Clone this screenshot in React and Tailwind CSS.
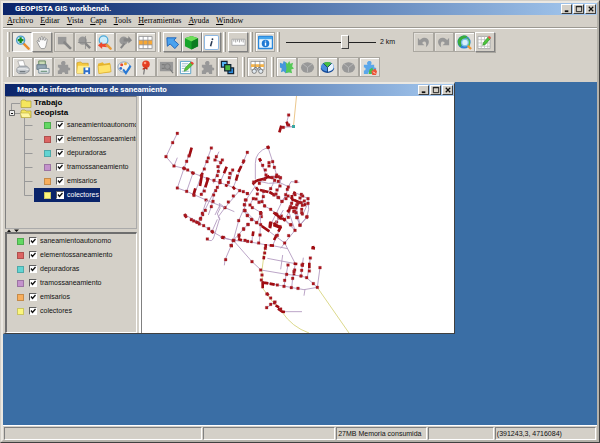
import React from "react";

const GREY = "#989898";
const GREY_DARK = "#868686";

const puzzle = "M2 5h4c-1.500-2 0-4 2-4s3 2 1.500 4H13v3c3-1 3 4 0 3v4H9.500c1-2.500-4-2.500-3 0H2v-4c2.500 1 2.500-4 0-3z";

const icons = {
  zoomIn: (
    <>
      <path d="M9.500 9.500l5 5" stroke="#e88a2a" strokeWidth="2.600" strokeLinecap="round" />
      <circle cx="6" cy="5.500" r="4.300" fill="#c4e2f4" stroke="#4b9ccb" strokeWidth="1.400" />
      <path d="M6 2.500v6M3 5.500h6" stroke="#128a1c" strokeWidth="2.400" />
    </>
  ),
  hand: (
    <path
      d="M2 6.500c1-1.500 2 0 2.500 1L4 4c0-1.500 1.600-1.500 1.800 0l.4 1.500.2-3c.1-1.300 1.600-1.300 1.800 0l.2 3 .8-2.500c.4-1.200 1.800-.8 1.600.5l-.3 2.500 1-1.400c.8-1 2-.2 1.500 1L12 10c-.4 2-1 4-2 4.500H6.500C4.500 12.500 3.500 9.500 2 6.500z"
      fill="#fbfbfb"
      stroke="#858585"
      strokeWidth="0.800"
    />
  ),
  zoomBox: (
    <>
      <path d="M1 2h9v8H1z" fill={GREY} />
      <path d="M8 8l6 6" stroke={GREY_DARK} strokeWidth="2.800" strokeLinecap="round" />
    </>
  ),
  zoomCross: (
    <>
      <circle cx="6" cy="6" r="4.500" fill={GREY} />
      <path d="M9 9l5 5" stroke={GREY_DARK} strokeWidth="2.600" />
      <path d="M1 8h14M9 1v14" stroke={GREY_DARK} strokeWidth="0.800" />
    </>
  ),
  zoomBack: (
    <>
      <path d="M9.500 9.500l5 5" stroke="#e99a35" strokeWidth="2.600" strokeLinecap="round" />
      <circle cx="7" cy="5.500" r="4.600" fill="#ccecfa" stroke="#4aa8d8" strokeWidth="1.300" />
      <path d="M1 11l4.500-3.500v2l5-.5-1.500 2 2 2-5.500-.5V15z" fill="#ee4a2e" />
    </>
  ),
  zoomForward: (
    <>
      <circle cx="6" cy="6" r="4.500" fill={GREY} />
      <path d="M7 9l-4 5" stroke={GREY_DARK} strokeWidth="2.200" />
      <path d="M6 3.500h5V1l4 4.500L11 9V7H6z" fill={GREY_DARK} />
    </>
  ),
  grid: (
    <>
      <path d="M1 1.500h14v13H1z" fill="#fff" stroke="#9b9b9b" />
      <path d="M1 5.500h14v5H1z" fill="#f7a836" />
      <path d="M5.500 1.500v13M10.500 1.500v13M1 5.500h14M1 10.500h14" stroke="#8b8e96" strokeWidth="0.800" />
    </>
  ),
  pointer: (
    <path d="M2 3h10L9.500 5.500l5 4.500-4 4.500-5-5L2.500 12z" fill="#4aa2ee" stroke="#1e62b8" strokeWidth="1" />
  ),
  cube: (
    <>
      <path d="M8 1l7 2.500v8.500l-7 3.500-7-3.500V3.500z" fill="#17a42b" />
      <path d="M8 1l7 2.500-7 3.500L1 3.500z" fill="#6ede58" />
      <path d="M8 7v8.500l7-3.500V3.500z" fill="#0b7c20" />
    </>
  ),
  info: (
    <>
      <rect x="0.500" y="0.500" width="15" height="15" rx="1.500" fill="#fff" stroke="#84b3e2" />
      <circle cx="9" cy="4.500" r="1" fill="#263751" />
      <path d="M8.500 6.500L7 12" stroke="#263751" strokeWidth="1.600" />
    </>
  ),
  ruler: (
    <>
      <path d="M1 4.500h14v6.500H1z" fill="#fff" stroke="#aaa" />
      <path d="M3 5v2M5 5v3M7 5v2M9 5v3M11 5v2M13 5v3" stroke="#777" strokeWidth="0.700" />
    </>
  ),
  infoWindow: (
    <>
      <rect x="0.500" y="1.500" width="15" height="13" rx="1" fill="#e9f6ff" stroke="#2a87db" strokeWidth="1.600" />
      <path d="M1 2h14v2.500H1z" fill="#45a6ee" />
      <circle cx="8" cy="9" r="4" fill="#1d78d4" />
      <path d="M8 8v3.500M8 6v1" stroke="#fff" strokeWidth="1.500" />
    </>
  ),
  undo: <path d="M2 3v8h7L6.500 8.500C9 5.500 12 7 10.500 13 16 9 14 2.500 8.500 3 6.500 3.200 5 4.500 4.200 5.500z" fill={GREY} />,
  redo: <path d="M14 3v8H7l2.500-2.500C7 5.500 4 7 5.500 13 0 9 2 2.500 7.500 3c2 .2 3.500 1.500 4.300 2.500z" fill={GREY} />,
  globe: (
    <>
      <circle cx="7.500" cy="7.500" r="7" fill="#2f83d8" />
      <path d="M3 2.500c3-3 7-2 8-1L8 4 4 7l1 3-1 3C0 10 0 5 3 2.500z" fill="#38ad3a" />
      <path d="M10 2c5 3 5 8 2 11l-2-3z" fill="#4cc14b" />
      <circle cx="8.500" cy="8" r="3.500" fill="#d7f0fb" stroke="#7ec1e8" strokeWidth="1.300" />
      <path d="M11.500 11.500L15 15" stroke="#ee9636" strokeWidth="2.400" />
    </>
  ),
  gridPencil: (
    <>
      <path d="M1 1.500h13v13H1z" fill="#fff" stroke="#aaa" />
      <path d="M4.500 1v14M8 1v14M11.500 1v14M1 5h13M1 8.500h13M1 12h13" stroke="#bbb" strokeWidth="0.800" />
      <path d="M6 11l1-3 5-6 2 2-5 6z" fill="#4cc63b" stroke="#238a20" strokeWidth="0.600" />
      <path d="M11.500 2.500L13 1l2 2-1.500 1.500z" fill="#ee5140" />
    </>
  ),
  printer: (
    <>
      <path d="M3 1l6-.5 2 6.500H5z" fill="#fff" stroke="#999" strokeWidth="0.700" />
      <path d="M2 9l3-2.500h7.500L15 9v3l-4 2.500H4L2 12.500z" fill="#bec3c8" stroke="#83888d" strokeWidth="0.800" />
      <path d="M2.500 9.500H11l3.500.5" stroke="#fff" fill="none" />
      <path d="M5 12.500h6" stroke="#596067" />
    </>
  ),
  printLayers: (
    <>
      <path d="M4 1h7v5H4z" fill="#c9dab6" stroke="#63865d" />
      <path d="M2 5h10v5H2z" fill="#94a7b4" stroke="#667a88" />
      <path d="M4 9h11v5H4z" fill="#e9eef0" stroke="#798c98" />
      <path d="M6 12h7" stroke="#4d7e5f" />
    </>
  ),
  puzzleGrey: <path d={puzzle} fill={GREY} />,
  folderSave: (
    <>
      <path d="M1 3l4-1 1.500 1.500H13V14H1z" fill="#f4c83d" stroke="#c99a20" strokeWidth="0.700" />
      <path d="M2 6h12l-1 8H1z" fill="#ffec8a" />
      <path d="M8 8h7v7H8z" fill="#2d6fcb" />
      <path d="M10 8h3v3h-3zM10 13h3v2h-3z" fill="#fff" />
    </>
  ),
  folder: (
    <>
      <path d="M1 4l5-1.500L7.500 4 14 3v10L2 14.500z" fill="#eab82e" />
      <path d="M1 6l13-1.500 1 8-13 2z" fill="#ffe36a" stroke="#d9a829" strokeWidth="0.700" />
    </>
  ),
  paletteCheck: (
    <>
      <ellipse cx="7.500" cy="7.500" rx="6.500" ry="5.500" fill="#f5f0e8" stroke="#8aa3bd" />
      <circle cx="5" cy="5" r="1.600" fill="#e44c35" />
      <circle cx="9" cy="4" r="1.600" fill="#f2a928" />
      <circle cx="4" cy="9" r="1.500" fill="#2f6fd0" />
      <path d="M6.500 10l3 4 5-8" fill="none" stroke="#2878d4" strokeWidth="2.200" />
    </>
  ),
  pin: (
    <>
      <path d="M7 9l-1 6.500" stroke="#777" strokeWidth="1.300" />
      <circle cx="8.500" cy="4.500" r="4" fill="#e43d22" />
      <circle cx="7.500" cy="3.200" r="1.400" fill="#ff9c80" />
      <path d="M5 10c2-2 4-2 5 0" stroke="#b92a18" strokeWidth="1.500" fill="none" />
    </>
  ),
  searchGrey: (
    <>
      <path d="M1 2h14v10H1z" fill={GREY} />
      <circle cx="9" cy="7" r="3" fill="none" stroke="#7c7c7c" />
      <path d="M11 9l4 5M3 5h3M3 9h3" stroke="#7c7c7c" strokeWidth="1.300" />
    </>
  ),
  notePencil: (
    <>
      <path d="M1.500 1.500h11v13h-11z" fill="#fff" stroke="#56a1c8" />
      <path d="M3 4h7M3 6.500h5M3 9h3M3 12h8" stroke="#99bac9" />
      <path d="M5.500 12l1-3.500 6-6 2.500 2-6 6z" fill="#56c43a" stroke="#2d8b25" strokeWidth="0.600" />
      <path d="M12 3l1.500-1.500L16 3.500 14.500 5z" fill="#e94335" />
    </>
  ),
  layers: (
    <>
      <path d="M1.500 1.500h6v6h-6z" fill="#55b4f4" stroke="#123" strokeWidth="1.300" />
      <path d="M8.500 8.500h6v6h-6z" fill="#2f8ddd" stroke="#123" strokeWidth="1.300" />
      <path d="M5 5h6.500v6.500H5z" fill="#48b83e" stroke="#123" strokeWidth="1.300" />
    </>
  ),
  gridSearch: (
    <>
      <path d="M1 1.500h14v9H1z" fill="#fff" stroke="#999" />
      <path d="M1 4.500h14v3H1z" fill="#f5b44b" />
      <path d="M5.500 1v10M10.500 1v10" stroke="#888" strokeWidth="0.800" />
      <path d="M3 12l2-4h2l1 2 1-2h2l2 4" fill="#bbc1c7" stroke="#666" strokeWidth="0.800" />
      <circle cx="4.500" cy="12" r="2.300" fill="#dfe8ef" stroke="#666" strokeWidth="0.800" />
      <circle cx="11.500" cy="12" r="2.300" fill="#dfe8ef" stroke="#666" strokeWidth="0.800" />
    </>
  ),
  puzzleMap: (
    <>
      <path d="M1 3l3 1 1-3 3 2v3l2 1-1 4 2 2-4 1-2-2-3 1 1-4-2-1z" fill="#4797dc" />
      <path d="M7 2l2 2 2-3 1 3 3-1-1 4 2 2-3 1 1 4-4-1-3 1 1-5z" fill="#55c957" />
    </>
  ),
  pieGrey: (
    <>
      <ellipse cx="8" cy="8" rx="7" ry="5.500" fill={GREY} />
      <path d="M8 8l-5-4M8 8l5-4M8 8v5" stroke="#b9b9b9" fill="none" />
    </>
  ),
  pie: (
    <>
      <ellipse cx="8" cy="8.800" rx="7" ry="5" fill="#164a99" />
      <ellipse cx="8" cy="7.200" rx="7" ry="5" fill="#488ddd" />
      <path d="M8 8L3.500 3.500Q8 .8 12.500 3.500z" fill="#48bd41" />
      <path d="M8 8l4.500-4.500c4 3 2 8-4.500 9z" fill="#e8f2fc" />
      <path d="M8 8L3.500 3.500M8 8l4.500-4.500M8 8v5" stroke="#184178" fill="none" />
    </>
  ),
  puzzleColor: (
    <>
      <path d={puzzle} fill="#5ba7ea" />
      <path d="M8 10l3-2 1 3-2 4H7z" fill="#4abf49" />
      <path d="M10 12l4-3 2 3-1 4h-4z" fill="#ec5437" />
      <path d="M12 12.500l2 2" stroke="#fff" />
    </>
  ),
};

const look = {
  raised: "border-t-white border-l-white border-r-[#808080] border-b-[#808080] shadow-[1px_1px_0_#a9a69f]",
  on: "border-t-[#808080] border-l-[#808080] border-r-white border-b-white bg-[#ece9e4]",
  flat: "border-[#aaa7a0] shadow-[inset_1px_1px_0_#e4e1dc]",
  lit: "border-[#aaa7a0] bg-[#e0ddd7] shadow-[inset_1px_1px_0_#fff]",
};

function Tool({ icon, label, kind = "flat" }) {
  return (
    <button
      type="button"
      aria-label={label}
      className={`flex h-5 w-full items-center justify-center border ${look[kind]}`}
    >
      <svg viewBox="0 0 16 16" className="h-[15px] w-[15px] shrink-0" fill="none">
        {icons[icon]}
      </svg>
    </button>
  );
}

function Grip() {
  return <div className="h-5 w-[3px] shrink-0 border-r border-l border-r-[#9a978f] border-l-white" />;
}

function TitleBar({ children, heading: Heading }) {
  return (
    <div className="flex h-3 items-center justify-between bg-linear-to-r from-[#0a246a] to-[#a6caf0] pr-px pl-3">
      <Heading className="font-[Roboto,'Liberation_Sans',sans-serif] text-[8px] leading-3 font-bold whitespace-nowrap text-white">
        {children}
      </Heading>
      <div className="flex gap-px">
        <CaptionButton label="Minimizar"><path d="M2 7h4" strokeWidth="2" /></CaptionButton>
        <CaptionButton label="Maximizar"><path d="M1.500 1.500h6v6h-6zM1 2h7" /></CaptionButton>
        <CaptionButton label="Cerrar"><path d="M2 2l5 5M7 2L2 7" strokeWidth="1.400" /></CaptionButton>
      </div>
    </div>
  );
}

function CaptionButton({ label, children }) {
  return (
    <button
      type="button"
      aria-label={label}
      className="flex h-[10px] w-[11px] items-center justify-center border border-t-white border-r-[#404040] border-b-[#404040] border-l-white bg-[#d4d0c8]"
    >
      <svg viewBox="0 0 9 9" className="h-2 w-2" fill="none" stroke="#111">{children}</svg>
    </button>
  );
}

const layers = [
  { name: "saneamientoautonomo", color: "bg-[#62d862]" },
  { name: "elementossaneamiento", color: "bg-[#dc6462]" },
  { name: "depuradoras", color: "bg-[#62d4d2]" },
  { name: "tramossaneamiento", color: "bg-[#c492cc]" },
  { name: "emisarios", color: "bg-[#f8ae5c]" },
  { name: "colectores", color: "bg-[#fcf67c]" },
];

function LayerRow({ layer, selected }) {
  return (
    <label
      className={`flex h-[14px] w-max items-center pr-px pl-[10px] text-[7px] leading-[14px] ${
        selected ? "bg-[#0a246a] text-white" : "text-[#111]"
      }`}
    >
      <span className={`mr-[5px] h-[7px] w-[7px] border border-black/20 ${layer.color}`} />
      <span className="mr-[3px] grid">
        <input
          type="checkbox"
          defaultChecked
          className="peer col-start-1 row-start-1 h-2 w-2 appearance-none border border-t-[#606060] border-r-white border-b-white border-l-[#606060] bg-white"
        />
        <svg viewBox="0 0 8 8" className="pointer-events-none invisible col-start-1 row-start-1 h-2 w-2 peer-checked:visible">
          <path d="M2 3.500l1.500 2L6.500 2" fill="none" stroke="#111" strokeWidth="1.300" />
        </svg>
      </span>
      {layer.name}
    </label>
  );
}

function LayerTree() {
  return (
    <div className="flex h-[133px] overflow-hidden border border-t-[#808080] border-r-[#aaa] border-b-[#aaa] border-l-[#808080] pt-px">
      <svg viewBox="0 0 28 120" className="h-[120px] w-7 shrink-0" fill="none" stroke="#999">
        <path d="M14 5.500H5.500V15M9 15.500h6M18.500 20v77.500M18.500 27.500h8M18.500 41.500h8M18.500 55.500h8M18.500 69.500h8M18.500 83.500h8M18.500 97.500h8" />
        <path d="M3.500 12.500h5v5h-5z" fill="#eee" stroke="#666" />
        <path d="M5 15.500h2" stroke="#111" />
        <g transform="translate(14 1)">
          <path d="M1 2l1-1h3l1 1h5v6.500H1z" fill="#f5e65c" stroke="#aa9c3a" strokeWidth="0.700" />
        </g>
        <g transform="translate(14 11)">
          <path d="M1 2l1-1h3l1 1h5v6.500H1z" fill="#f5e65c" stroke="#aa9c3a" strokeWidth="0.700" />
          <path d="M0 4h9l2 4.500H2z" fill="#fff6a0" stroke="#aa9c3a" strokeWidth="0.500" />
        </g>
      </svg>
      <div className="min-w-0">
        <p className="text-[8px] leading-[10px] font-bold text-black">Trabajo</p>
        <p className="text-[8px] leading-[10px] font-bold text-black">Geopista</p>
        <ul>
          {layers.map((l) => (
            <li key={l.name}><LayerRow layer={l} selected={l.name === "colectores"} /></li>
          ))}
        </ul>
      </div>
    </div>
  );
}

/* Sewer network, surveyed in sheets. Each sheet has its own origin and a 3:1 scale. */
const sheets = [
  {
    at: "translate(140 80) scale(0.33333)",
    pipes:
      "M112 160L98 188 78 230 102 258 132 265 159 279 203 296 240 308 280 322 322 341M112 233L102 258M155 203L132 265 112 324 140 334 198 360 255 383 283 395M159 279L140 334M214 204L184 287 162 346M237 215L225 240 247 247M246 240L220 310M203 296L184 343M260 262L240 308 222 340 214 380 205 405M222 335L181 418M278 270L265 317M322 217L311 243 280 322M300 330L255 383 235 410 240 420M240 375L225 405M446 105L440 127 446 140 460 140 422 142M384 202Q346 215 346 250V297M384 202L398 245 410 285M360 240L378 285",
    dense:
      "M155 203L148 228M128 262L137 268M154 276L163 282M187 278L180 318M166 325L160 347M205 294L196 322M198 295L208 298M260 260L252 280M240 297L240 312M255 315L263 318M313 240L308 250M304 258L295 276M293 284L288 302M278 320L285 328M318 340L326 340M424 137L418 157M440 125L444 138M359 236L362 244",
    dots:
      "112,160 98,188 78,230 102,258 132,265 143,270 159,279 112,324 140,334 147,228 140,244 162,346 198,360 214,204 205,234 201,245 193,267 184,287 229,230 225,240 247,240 242,248 234,260 235,274 232,287 222,301 240,308 232,322 227,332 221,345 219,364 214,380 265,366 255,383 280,348 196,391 188,404 181,418 184,343 193,333 270,280 278,270 268,293 265,307 322,217 311,243 299,332 310,335 322,341 316,360 314,375 314,392 446,105 446,135 430,142 384,202 398,245 387,248 403,262 387,258 368,256 376,270 378,285 410,285 421,294",
  },
  {
    at: "translate(140 200) scale(0.33333)",
    pipes:
      "M136 45L177 68 217 95 249 113 280 121M177 68L200 0M202 117Q216 130 222 110L239 55 232 42 240 25 238 10 255 23M217 92L232 58",
    dense: "M133 42L140 53M166 64L178 70M213 92L221 99M244 110L255 115M276 121L286 121",
    dots: "136,47 154,59 161,63 171,67 178,72 191,77 206,86 217,95 187,40 182,55 202,117 250,112 280,122",
  },
  {
    at: "translate(220 120) scale(0.33333)",
    pipes:
      "M98 193L110 182 140 170 165 168 184 174M98 193L115 209 145 215 168 225 186 245 198 225 217 236 240 248 263 251M110 182L145 190 180 188 205 200M205 200L213 185 238 187M205 200L198 225 186 245 168 282 154 310M165 168L158 195 145 215M184 174L172 215M130 215L126 245 134 258 152 268 168 280 194 298 212 315M126 245L100 235 92 250 90 258 123 278 112 308M105 200L78 240 72 272 82 288 110 308 145 330M222 215L212 250 206 278 194 298M244 222L240 248 225 275 232 293M264 235L266 268 260 292 240 316M263 251L247 287M230 220L265 236",
    dense:
      "M98 193L110 181M108 202L115 212M110 182L130 177M130 178L148 168M144 171L158 174M165 168L171 173M120 210L145 216M148 216L165 226M182 244L190 245M215 225L217 238M225 215L221 224M213 232L221 243M222 240L241 248M210 260L206 278M213 264L226 262M225 270L223 279M252 258L257 250M160 278L174 285M192 298L196 299M151 305L149 322M160 315L184 324M130 256L137 259M118 115L122 124M142 78L147 86",
    dots:
      "118,190 101,186 134,178 157,173 175,170 181,173 164,181 175,184 180,198 171,210 168,222 174,232 162,225 152,206 131,214 130,230 112,222 100,236 90,255 97,263 117,247 126,245 134,258 123,280 124,290 152,268 169,282 184,288 194,299 205,292 205,201 202,208 197,224 198,236 204,228 215,250 225,224 244,223 248,228 240,234 264,236 264,250 253,243 244,248 233,250 247,256 230,255 212,260 222,275 228,264 245,268 247,282 231,293 260,292 240,316 228,185 176,233 186,244 108,237 73,254 73,271 82,287 95,298 110,308 78,240 84,314 71,326 177,294 170,306 180,320 213,315",
  },
  {
    at: "translate(220 210) scale(0.33333)",
    pipes:
      "M70 0L56 32 40 91 33 108 15 150 13 166M40 91L0 82M40 91L96 155 123 180 200 193 243 198 260 203 292 232 300 173M40 91L90 96 136 104 158 107 203 116M40 91L68 60 84 43M98 68L96 96M122 10L120 75 117 100M74 0L110 38 150 66 194 99 226 161M164 10L196 32 225 61M182 50L158 107M190 0L164 45M205 0L225 61M220 0L240 45M230 0L240 45 262 20M225 61L194 99 182 115M142 145L226 161M188 135L182 178M226 161L218 205 215 233M204 165L192 229M250 143L243 198M271 144L262 203M128 216L172 225 252 239 292 232M255 238L252 257M188 305H246M140 293L165 276",
    dense:
      "M36 90L45 93M4 82L12 84M35 103L35 112M53 79L61 80M54 87L66 91M100 64L98 78M91 95L98 96M137 102L137 114M149 106L162 107M132 138L131 148M128 214L128 235M126 217L145 220M149 221L164 224M164 273L163 283M167 286L177 292M174 296L188 306M186 305L195 306M221 161L232 162M222 190L222 196M249 158L247 170M268 158L268 175M240 197L246 199M274 114L285 115M279 108L280 118M125 48L148 64M183 49L175 65M171 73L162 90M154 35L150 55M160 39L180 52M164 10L186 28M205 0L203 6M122 3L122 14M188 25L196 32M139 249L146 256",
    dots:
      "40,91 33,106 17,149 75,2 56,32 82,16 95,29 110,38 84,43 71,58 57,75 75,91 83,94 122,10 122,44 120,75 116,99 194,99 206,77 225,61 212,44 240,45 231,23 228,8 222,3 245,8 261,20 172,76 136,115 134,129 96,155 122,180 126,195 124,210 204,165 224,180 200,193 222,185 245,181 246,165 243,198 271,144 268,183 260,203 280,221 292,232 300,173 194,211 218,205 192,229 214,233 234,235 172,225 141,252 152,264 165,276 152,283 140,293 182,297",
  },
];

const point = (pair) => {
  const [x, y] = pair.split(",").map(Number);
  return `M${x - 4} ${y - 4}h8v8h-8z`;
};

function NetworkMap() {
  return (
    <svg viewBox="142 96 312 237" className="h-auto w-full bg-white" fill="none" role="img" aria-label="Red de saneamiento">
      <path d="M296.500 96L293.500 126" stroke="#ecc78d" strokeWidth="1" />
      <path d="M265 247L262 270 262.500 288 272 301 282 312Q292 327 309 333M317 287L349 333" stroke="#dcd98c" strokeWidth="1" />
      {sheets.map((s) => (
        <g key={s.at} transform={s.at}>
          <path d={s.pipes} stroke="#b097be" strokeWidth="2.600" />
          <path d={s.dense} stroke="#a00c12" strokeWidth="8" />
          <path d={s.dots.split(" ").map(point).join("")} fill="#ab1118" stroke="#a04048" strokeWidth="1" />
        </g>
      ))}
      <path d="M292 125h3v3h-3z" fill="#39a7a0" />
    </svg>
  );
}

const menus = ["Archivo", "Editar", "Vista", "Capa", "Tools", "Herramientas", "Ayuda", "Window"];

const statusCell =
  "h-[13px] overflow-hidden border border-t-[#808080] border-r-white border-b-white border-l-[#808080] pl-px text-[7px] leading-[11px] whitespace-nowrap";

export default function App() {
  return (
    <div className="flex min-h-screen flex-col border-t border-r border-b border-l border-t-[#d4d0c8] border-r-[#404040] border-b-[#404040] border-l-[#d4d0c8] bg-[#d4d0c8] font-['Liberation_Sans',Arial,sans-serif] text-[#111]">
      <div className="flex grow flex-col border-2 border-t-[#ebe8e2] border-r-[#b5b2aa] border-b-[#b5b2aa] border-l-[#ebe8e2]">
        <TitleBar heading="h1">GEOPISTA GIS workbench.</TitleBar>
        <nav className="flex h-[13px] gap-[7px] border-b border-[#9c9992] pl-1 font-['Liberation_Serif',serif] text-[8px] leading-3 font-medium text-black">
          {menus.map((m) => (
            <button key={m} type="button">
              <span className="underline">{m[0]}</span>{m.slice(1)}
            </button>
          ))}
        </nav>

        <div className="flex flex-col gap-[5px] border-t border-white pt-[3px] pb-[5px] pl-1">
          <div className="flex items-center gap-[2px]">
            <Grip />
            <div className="grid w-10 grid-cols-2">
              <Tool icon="zoomIn" label="Acercar" kind="on" />
              <Tool icon="hand" label="Desplazar" kind="raised" />
            </div>
            <div className="grid w-[102px] grid-cols-5">
              <Tool icon="zoomBox" label="Zoom a ventana" />
              <Tool icon="zoomCross" label="Zoom al punto" />
              <Tool icon="zoomBack" label="Zoom anterior" kind="lit" />
              <Tool icon="zoomForward" label="Zoom siguiente" />
              <Tool icon="grid" label="Tabla" kind="lit" />
            </div>
            <Grip />
            <div className="grid w-[58px] grid-cols-3">
              <Tool icon="pointer" label="Seleccionar" kind="raised" />
              <Tool icon="cube" label="Elementos" kind="raised" />
              <Tool icon="info" label="Información" kind="raised" />
            </div>
            <Grip />
            <div className="w-5">
              <Tool icon="ruler" label="Medir" kind="raised" />
            </div>
            <Grip />
            <div className="w-5">
              <Tool icon="infoWindow" label="Ver información" kind="lit" />
            </div>
            <Grip />
            <label className="flex items-center gap-1 pl-1 text-[7px] leading-3">
              <input
                type="range"
                aria-label="Escala"
                defaultValue="67"
                className="h-4 w-[90px] appearance-none bg-transparent [&::-webkit-slider-runnable-track]:h-px [&::-webkit-slider-runnable-track]:bg-[#222] [&::-webkit-slider-thumb]:-mt-[7px] [&::-webkit-slider-thumb]:h-[14px] [&::-webkit-slider-thumb]:w-2 [&::-webkit-slider-thumb]:appearance-none [&::-webkit-slider-thumb]:border [&::-webkit-slider-thumb]:border-t-white [&::-webkit-slider-thumb]:border-r-[#404040] [&::-webkit-slider-thumb]:border-b-[#404040] [&::-webkit-slider-thumb]:border-l-white [&::-webkit-slider-thumb]:bg-[#d4d0c8]"
              />
              2 km
            </label>
            <div className="ml-4 grid w-[82px] grid-cols-4">
              <Tool icon="undo" label="Deshacer" />
              <Tool icon="redo" label="Rehacer" />
              <Tool icon="globe" label="Ver mapa" kind="lit" />
              <Tool icon="gridPencil" label="Editar tabla" kind="raised" />
            </div>
          </div>

          <div className="flex items-center gap-1">
            <div className="flex gap-[2px]">
              <Grip />
              <div className="grid w-[226px] grid-cols-11">
                <Tool icon="printer" label="Imprimir" kind="lit" />
                <Tool icon="printLayers" label="Imprimir capas" kind="lit" />
                <Tool icon="puzzleGrey" label="Extensión" />
                <Tool icon="folderSave" label="Guardar mapa" kind="lit" />
                <Tool icon="folder" label="Abrir mapa" kind="lit" />
                <Tool icon="paletteCheck" label="Estilos" kind="lit" />
                <Tool icon="pin" label="Marcar" kind="lit" />
                <Tool icon="searchGrey" label="Buscar" />
                <Tool icon="notePencil" label="Editar" kind="lit" />
                <Tool icon="puzzleGrey" label="Complemento" />
                <Tool icon="layers" label="Capas" kind="lit" />
              </div>
            </div>
            <div className="flex gap-[2px]">
              <Grip />
              <div className="w-5">
                <Tool icon="gridSearch" label="Consultar" kind="lit" />
              </div>
            </div>
            <div className="flex gap-[2px]">
              <Grip />
              <div className="grid w-[104px] grid-cols-5">
                <Tool icon="puzzleMap" label="Municipios" kind="lit" />
                <Tool icon="pieGrey" label="Gráfico" />
                <Tool icon="pie" label="Temático" kind="lit" />
                <Tool icon="pieGrey" label="Quitar gráfico" />
                <Tool icon="puzzleColor" label="Módulos" kind="lit" />
              </div>
            </div>
          </div>
        </div>

        <main className="grow bg-[#3a6ea5]">
          <section className="w-[452px] border-t-2 border-r border-b border-l-2 border-t-[#ebe8e2] border-r-[#404040] border-b-[#404040] border-l-[#d4d0c8] bg-[#d4d0c8]">
            <TitleBar heading="h2">Mapa de infraestructuras de saneamiento</TitleBar>
            <div className="flex">
              <aside className="w-[137px] shrink-0 border-r border-[#808080]">
                <div className="border-r-2 border-white pr-[2px]">
                  <LayerTree />
                  <svg viewBox="0 0 132 3" className="h-[3px] w-full">
                    <path d="M2 3l2-2.500L6 3zM9 .5h5L11.500 3z" fill="#111" />
                  </svg>
                  <ul className="h-[101px] border-t-2 border-r border-b border-l-2 border-t-[#6e6e6e] border-r-white border-b-white border-l-[#6e6e6e]">
                    {layers.map((l) => (
                      <li key={l.name}><LayerRow layer={l} /></li>
                    ))}
                  </ul>
                </div>
              </aside>
              <div className="min-w-0 grow"><NetworkMap /></div>
            </div>
          </section>
        </main>

        <footer className="grid grid-cols-[200fr_133fr_92fr_66fr_102fr] gap-px border-t border-white px-px pt-px">
          <div className={statusCell} />
          <div className={statusCell} />
          <div className={statusCell}>27MB Memoria consumida</div>
          <div className={statusCell} />
          <div className={statusCell}>(391243,3, 4716084)</div>
        </footer>
      </div>
    </div>
  );
}
